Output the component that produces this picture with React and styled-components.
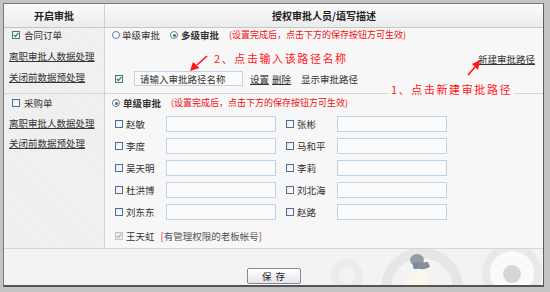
import React from "react";
import styled, { createGlobalStyle, css } from "styled-components";

const Global = createGlobalStyle`
  html, body { margin: 0; padding: 0; }
  body {
    background: #c4c4c4;
    font-family: "Noto Sans CJK SC", "Liberation Sans", sans-serif;
    font-size: 9.5px;
    color: #333;
  }
`;

const Page = styled.div`
  padding: 3px 0 0 3px;
  width: 550px;
  height: 292px;
  box-sizing: border-box;
`;

const Panel = styled.div`
  width: 541px;
  box-sizing: border-box;
  border: 1px solid #7a7a7a;
  border-right-color: #5e5e5e;
  border-bottom: 2px solid #555;
  background: #f6f6f6;
  display: flex;
  flex-direction: column;
`;

const Header = styled.div`
  display: grid;
  grid-template-columns: 101px 1fr;
  height: 23px;
  border-bottom: 1px solid #c6c6c6;
  background: linear-gradient(#fbfbfb, #ececec);
`;

const HeadCell = styled.div`
  display: flex;
  align-items: center;
  justify-content: center;
  font-weight: bold;
  font-size: 10px;
  color: #222;
  ${(p) => p.$divider && css`border-right: 1px solid #d0d0d0;`}
`;

const Row = styled.div`
  display: grid;
  grid-template-columns: 101px 1fr;
  height: ${(p) => p.$h}px;
  border-bottom: 1px solid #d6d6d6;
`;

const LeftCell = styled.div`
  background: repeating-linear-gradient(45deg, #eeeeee 0 2px, #f1f1f1 2px 4px);
  border-right: 1px solid #d2d2d2;
  display: flex;
  flex-direction: column;
  gap: ${(p) => p.$gap}px;
  padding: ${(p) => p.$pt}px 0 0 5px;
`;

const RightCell = styled.div`
  position: relative;
  background: #f7f7f7;
  padding: ${(p) => p.$pt}px 8px 0 7px;
  display: flex;
  flex-direction: column;
`;

const Line = styled.div`
  display: flex;
  align-items: center;
  height: ${(p) => p.$h || 12}px;
  margin-top: ${(p) => p.$mt || 0}px;
  margin-left: ${(p) => p.$ml || 0}px;
  white-space: nowrap;
`;

const Label = styled.span`
  line-height: 12px;
  margin-left: ${(p) => p.$ml || 0}px;
  font-weight: ${(p) => (p.$bold ? "bold" : "normal")};
  color: ${(p) => p.$color || "#333"};
`;

const Link = styled.a`
  color: #333;
  text-decoration: underline;
  line-height: 12px;
  margin-left: ${(p) => p.$ml || 0}px;
  cursor: pointer;
  white-space: nowrap;
`;

const Note = styled.span`
  color: #ee1111;
  font-size: 9px;
  line-height: 12px;
  margin-left: ${(p) => p.$ml || 0}px;
`;

const Annotation = styled.span`
  color: #ff1515;
  font-size: 11px;
  letter-spacing: 1.6px;
  line-height: 13px;
  margin-left: ${(p) => p.$ml || 0}px;
  white-space: nowrap;
`;

const FloatingAnnotation = styled(Annotation)`
  position: absolute;
  z-index: 3;
  left: 284px;
  top: 55px;
  background: #f7f7f7;
  padding: 0 2px;
`;

const Box = styled.span`
  display: inline-flex;
  align-items: center;
  justify-content: center;
  width: 8px;
  height: 8px;
  box-sizing: border-box;
  border: 1px solid ${(p) => (p.$disabled ? "#c4c4c4" : "#4f6f92")};
  background: ${(p) => (p.$disabled ? "#f0f0f0" : "linear-gradient(135deg, #e6ebf2, #ffffff)")};
  flex: none;
`;

const RadioDot = styled.span`
  display: inline-flex;
  align-items: center;
  justify-content: center;
  width: 8px;
  height: 8px;
  box-sizing: border-box;
  border-radius: 50%;
  border: 1px solid #5a7ca3;
  background: #fff;
  flex: none;
  margin-left: ${(p) => p.$ml || 0}px;
  &::after {
    content: "";
    display: ${(p) => (p.$checked ? "block" : "none")};
    width: 3px;
    height: 3px;
    border-radius: 50%;
    background: #3f7a3a;
  }
`;

const Check = ({ checked, disabled }) => (
  <Box $disabled={disabled}>
    {checked && (
      <svg width="6" height="6" viewBox="0 0 6 6">
        <path d="M0.8 3 L2.4 4.6 L5.3 1.2" fill="none" stroke={disabled ? "#b0b0b0" : "#2f8a2a"} strokeWidth="1.3" />
      </svg>
    )}
  </Box>
);

const TextInput = styled.input`
  box-sizing: border-box;
  width: ${(p) => p.$w}px;
  height: ${(p) => p.$h || 16}px;
  margin-left: ${(p) => p.$ml || 0}px;
  border: 1px solid #bcd3ec;
  background: #fbfbfb;
  padding: 0 5px;
  font-family: inherit;
  font-size: 9.5px;
  color: #333;
  outline: none;
  flex: none;
`;

const Grid = styled.div`
  display: grid;
  grid-template-columns: 161px 161px;
  column-gap: 10px;
  row-gap: 6px;
  margin: 7px 0 0 3px;
`;

const Entry = styled.div`
  display: flex;
  align-items: center;
  height: 16px;
`;

const Name = styled.span`
  width: 40px;
  margin-left: 3px;
  line-height: 12px;
  flex: none;
`;

const Extra = styled.div`
  display: flex;
  align-items: center;
  height: 16px;
  margin: 8px 0 0 3px;
`;

const Bracket = styled.span`
  color: #c03030;
`;

const Footer = styled.div`
  position: relative;
  height: 36px;
  display: flex;
  justify-content: center;
  align-items: flex-end;
  padding-bottom: 1px;
  box-sizing: border-box;
  background: #f3f3f3;
  overflow: hidden;
`;

const Decor = styled.svg`
  position: absolute;
  left: 0;
  top: 0;
  pointer-events: none;
`;

const Button = styled.button`
  position: relative;
  width: 54px;
  height: 16px;
  padding: 0;
  border: 1px solid #8a8a8a;
  border-radius: 2px;
  background: linear-gradient(#ffffff, #e2e6ec);
  font-family: inherit;
  font-size: 9.5px;
  color: #222;
  letter-spacing: 4px;
  text-indent: 4px;
  line-height: 14px;
`;

const Arrow = styled.svg`
  position: absolute;
  z-index: 3;
  pointer-events: none;
`;

const names = [
  ["赵敏", "张彬"],
  ["李度", "马和平"],
  ["吴天明", "李莉"],
  ["杜洪博", "刘北海"],
  ["刘东东", "赵路"],
];

const NOTE = "(设置完成后，点击下方的保存按钮方可生效)";

export default function App() {
  return (
    <Page>
      <Global />
      <Panel>
        <Header>
          <HeadCell $divider>开启审批</HeadCell>
          <HeadCell>授权审批人员/填写描述</HeadCell>
        </Header>

        <Row $h={65}>
          <LeftCell $pt={1} $gap={9}>
            <Line $ml={3}>
              <Check checked />
              <Label $ml={4}>合同订单</Label>
            </Line>
            <Line><Link>离职审批人数据处理</Link></Line>
            <Line><Link>关闭前数据预处理</Link></Line>
          </LeftCell>
          <RightCell $pt={1}>
            <Line>
              <RadioDot />
              <Label $ml={2}>单级审批</Label>
              <RadioDot $ml={10} $checked />
              <Label $ml={3} $bold>多级审批</Label>
              <Note $ml={10}>{NOTE}</Note>
            </Line>
            <Line $mt={11} $h={13}>
              <Annotation $ml={102}>2、点击输入该路径名称</Annotation>
              <Link style={{ marginLeft: "auto" }}>新建审批路径</Link>
            </Line>
            <Line $mt={6} $h={15} $ml={3}>
              <Check checked />
              <TextInput $w={109} $h={15} $ml={11} defaultValue="请输入审批路径名称" />
              <Link $ml={7}>设置</Link>
              <Link $ml={3}>删除</Link>
              <Label $ml={10}>显示审批路径</Label>
            </Line>
            <FloatingAnnotation>1、点击新建审批路径</FloatingAnnotation>
            <Arrow style={{ left: 82, top: 26 }} width="24" height="20" viewBox="0 0 24 20">
              <path d="M20 2 L10 11" stroke="#ff1515" strokeWidth="1.6" fill="none" />
              <path d="M3 17 L6 8 L12.5 14 Z" fill="#ff1515" />
            </Arrow>
            <Arrow style={{ left: 360, top: 30 }} width="20" height="20" viewBox="0 0 20 20">
              <path d="M3 17 L10 9" stroke="#ff1515" strokeWidth="1.6" fill="none" />
              <path d="M15 2 L7 6 L13 12 Z" fill="#ff1515" />
            </Arrow>
          </RightCell>
        </Row>

        <Row $h={154}>
          <LeftCell $pt={3} $gap={8}>
            <Line $ml={3}>
              <Check />
              <Label $ml={4}>采购单</Label>
            </Line>
            <Line><Link>离职审批人数据处理</Link></Line>
            <Line><Link>关闭前数据预处理</Link></Line>
          </LeftCell>
          <RightCell $pt={3}>
            <Line>
              <RadioDot $checked />
              <Label $ml={3} $bold>单级审批</Label>
              <Note $ml={10}>{NOTE}</Note>
            </Line>
            <Grid>
              {names.flat().map((n) => (
                <Entry key={n}>
                  <Check />
                  <Name>{n}</Name>
                  <TextInput $w={110} />
                </Entry>
              ))}
            </Grid>
            <Extra>
              <Check checked disabled />
              <Label $ml={3}>王天虹</Label>
              <Label $ml={6} $color="#555">
                <Bracket>[</Bracket>有管理权限的老板帐号<Bracket>]</Bracket>
              </Label>
            </Extra>
          </RightCell>
        </Row>

        <Footer>
          <Decor width="539" height="36" viewBox="0 0 539 36">
            <g fill="none" stroke="#e6e6e6" strokeWidth="10">
              <circle cx="418" cy="40" r="36" />
            </g>
            <circle cx="343" cy="26" r="16" fill="#ebebeb" />
            <circle cx="343" cy="26" r="8" fill="#f3f3f3" />
            <circle cx="508" cy="24" r="30" fill="#e9e9e9" />
            <circle cx="508" cy="24" r="22" fill="#fafafa" />
            <circle cx="508" cy="25" r="9" fill="#d6d6d6" />
            <ellipse cx="413" cy="11" rx="7" ry="6" fill="#9a9aa2" />
            <path d="M408 14 q6 10 18 4 l-2 -5 z" fill="#8c8c94" />
            <rect x="409" y="14" width="6" height="6" rx="2" fill="#6f8fb0" />
            <path d="M400 36 q4 -16 22 -14 q6 6 2 14 z" fill="#fbf6ec" />
          </Decor>
          <Button>保存</Button>
        </Footer>
      </Panel>
    </Page>
  );
}
